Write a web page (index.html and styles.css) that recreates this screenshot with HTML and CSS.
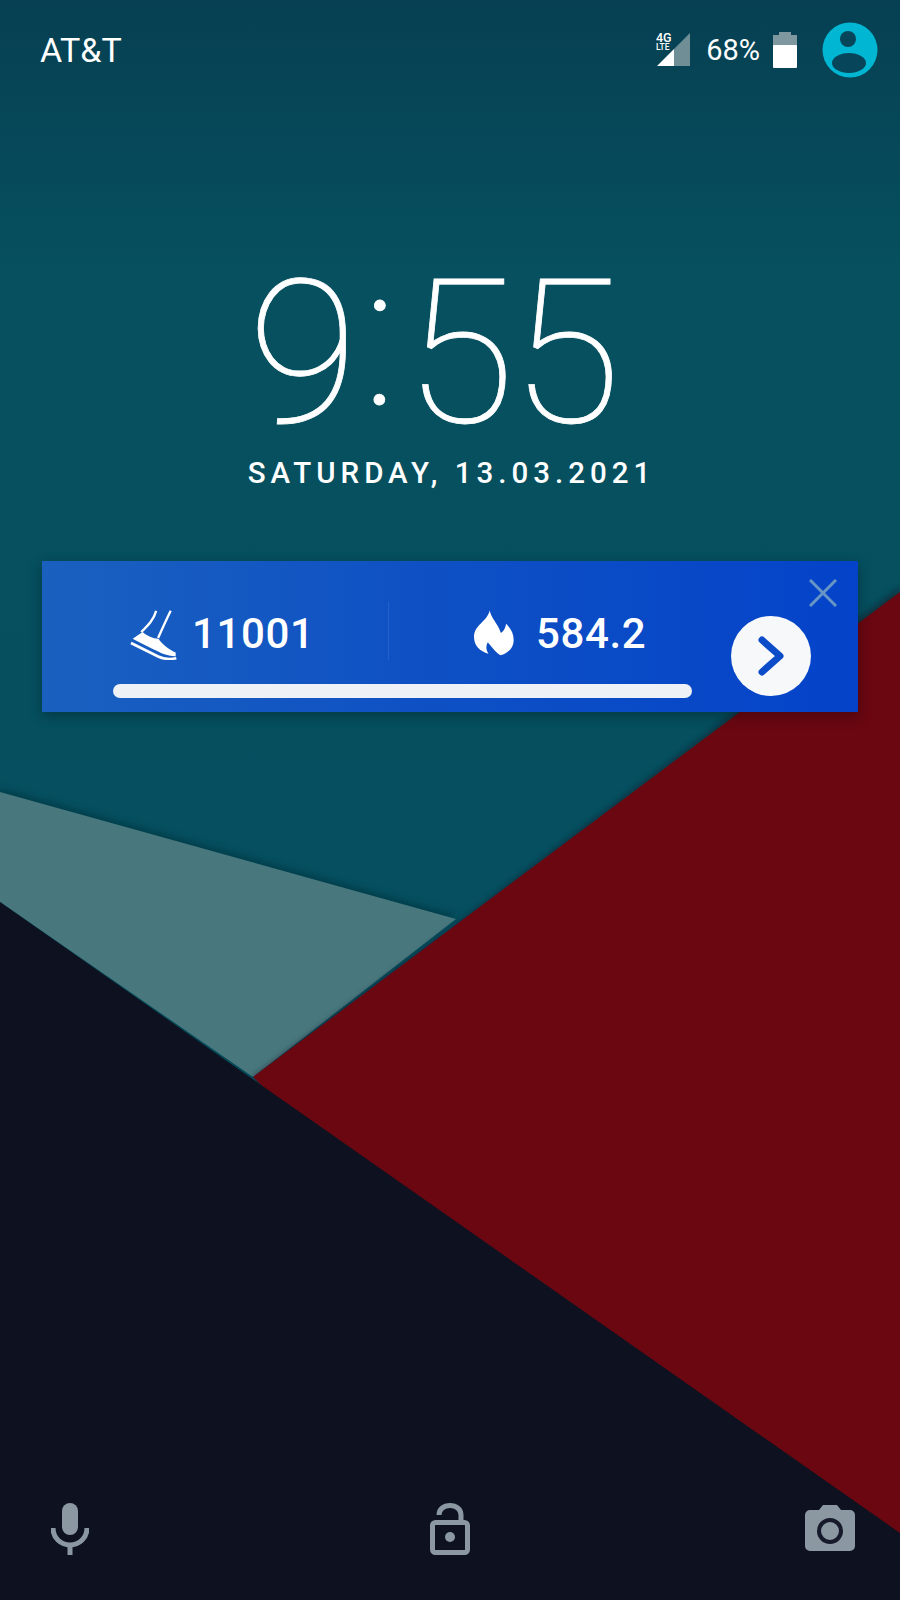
FILE: index.html
```html
<!DOCTYPE html>
<html lang="en">
<head>
<meta charset="utf-8">
<title>Lock screen</title>
<link rel="stylesheet" href="styles.css">
</head>
<body>
<main class="screen">
  <svg class="wallpaper" viewBox="0 0 900 1600" width="900" height="1600" aria-hidden="true">
    <defs>
      <linearGradient id="teal" x1="0" y1="0" x2="0" y2="1">
        <stop offset="0" stop-color="#064052"/>
        <stop offset="0.17" stop-color="#06505f"/>
        <stop offset="0.55" stop-color="#054f60"/>
      </linearGradient>
      <filter id="soft" x="-5%" y="-5%" width="110%" height="110%"><feGaussianBlur stdDeviation="3"/></filter>
    </defs>
    <rect width="900" height="1600" fill="url(#teal)"/>
    <polygon points="0,788 456,915 250,1075 0,900" fill="#02303b" opacity=".55" filter="url(#soft)"/>
    <polygon points="0,792 456,919 253,1077 0,902" fill="#48787e"/>
    <polygon points="900,588 900,1600 700,1600 253,1077 456,925" fill="#1c0a12" opacity=".5" filter="url(#soft)"/>
    <polygon points="900,592 900,1600 800,1600 253,1077" fill="#6a0711"/>
    <polygon points="0,902 900,1533 900,1600 0,1600" fill="#0e1220"/>
  </svg>

  <header class="status">
    <span class="carrier">AT&amp;T</span>
    <div class="status-right">
      <svg class="signal" viewBox="0 0 36 36" width="36" height="36" aria-hidden="true">
        <polygon points="35,1 35,34 19,34 19,17" fill="#6f8e96"/>
        <polygon points="19,17 19,34 2,34" fill="#fff"/>
        <text class="sig-4g" x="1" y="10">4G</text>
        <text class="sig-lte" x="1" y="18">LTE</text>
      </svg>
      <span class="battery-pct">68%</span>
      <svg class="battery" viewBox="0 0 24 36" width="24" height="36" aria-hidden="true">
        <path d="M0 3h6V0h12v3h6v13H0z" fill="#7f989f"/>
        <rect y="13" width="24" height="23" rx="1" fill="#fff"/>
      </svg>
      <svg class="avatar" viewBox="0 0 56 56" width="56" height="56" aria-hidden="true">
        <circle cx="28" cy="28" r="27.5" fill="#00b6d3"/>
        <circle cx="26" cy="17" r="8" fill="#06455a"/>
        <ellipse cx="27" cy="41" rx="17" ry="10" fill="#06455a"/>
      </svg>
    </div>
  </header>

  <section class="clock">
    <div class="time"><span>9</span><span class="colon">:</span><span>55</span></div>
    <div class="date">SATURDAY, 13.03.2021</div>
  </section>

  <section class="card">
    <svg class="close" viewBox="0 0 28 28" width="28" height="28" aria-hidden="true">
      <path d="M1 1l26 26M27 1L1 27" stroke="#6795c5" stroke-width="3" fill="none"/>
    </svg>
    <div class="card-main">
      <div class="stats">
        <div class="stat stat-steps">
          <svg class="shoe" viewBox="300 180 142 150" width="47" height="50" aria-hidden="true">
            <path d="M379 182C372 208 356 224 334 246M423 182C410 208 398 235 385 264" stroke="#fff" stroke-width="7" fill="none"/>
            <path d="M308 266L338 246C352 258 368 266 386 266C396 282 420 300 438 308V319C420 320 402 314 385 305C360 292 332 280 308 266Z" fill="#fff"/>
            <path d="M303 279L385 320C402 328 422 329 440 325" stroke="#fff" stroke-width="8" fill="none"/>
          </svg>
          <span class="num">11001</span>
        </div>
        <div class="divider"></div>
        <div class="stat stat-cal">
          <svg class="flame" viewBox="72 180 122 140" width="40" height="46" aria-hidden="true">
            <path d="M120 181C124 205 146 222 154 250C164 244 168 234 170 222C184 236 193 252 193 272C193 296 175 312 152 318C140 310 128 295 114 278C108 288 108 300 116 313C90 306 72 288 72 262C72 225 112 215 120 181Z" fill="#fff"/>
          </svg>
          <span class="num">584.2</span>
        </div>
      </div>
      <div class="progress"></div>
    </div>
    <div class="go">
      <svg viewBox="0 0 28 42" width="28" height="42" aria-hidden="true">
        <path d="M5 5l18 16L5 37" stroke="#0d4cc8" stroke-width="7" stroke-linecap="round" stroke-linejoin="round" fill="none"/>
      </svg>
    </div>
  </section>

  <footer class="actions">
    <svg viewBox="0 0 38 52" width="38" height="52" aria-hidden="true">
      <rect x="11" y="0" width="16" height="32" rx="8" fill="#8b98a2"/>
      <path d="M2 25C2 35 10 42 19 42S36 35 36 25" stroke="#8b98a2" stroke-width="5" fill="none"/>
      <path d="M19 41v11" stroke="#8b98a2" stroke-width="5" fill="none"/>
    </svg>
    <svg class="lock" viewBox="0 0 40 52" width="40" height="52" aria-hidden="true">
      <path d="M9 12C9 6 14 2.5 20 2.5S31 6 31 12V18" stroke="#8b98a2" stroke-width="5" fill="none"/>
      <rect x="2.5" y="19.5" width="35" height="30" rx="3" stroke="#8b98a2" stroke-width="5" fill="none"/>
      <circle cx="20" cy="34" r="5" fill="#8b98a2"/>
    </svg>
    <svg class="camera" viewBox="0 0 50 46" width="50" height="46" aria-hidden="true">
      <path d="M5 5h9l4-5h14l4 5h9a5 5 0 0 1 5 5v31a5 5 0 0 1-5 5H5a5 5 0 0 1-5-5V10a5 5 0 0 1 5-5z" fill="#8b98a2"/>
      <circle cx="25" cy="26" r="11" fill="#8b98a2" stroke="#161a2b" stroke-width="4"/>
    </svg>
  </footer>
</main>
</body>
</html>
```

FILE: styles.css
```css
* { box-sizing: border-box; }
html, body { margin: 0; padding: 0; }
body { background: #0e1220; font-family: Roboto, "Liberation Sans", sans-serif; color: #fff; }

.screen {
  position: relative;
  width: 900px;
  height: 1600px;
  overflow: hidden;
  display: flex;
  flex-direction: column;
}
.wallpaper { position: absolute; inset: 0; display: block; }
.status, .clock, .card, .actions { position: relative; }

.status {
  height: 100px;
  display: flex;
  align-items: center;
  justify-content: space-between;
  padding: 0 40px;
}
.carrier { font-size: 34px; }
.status-right { display: flex; align-items: center; }
.signal { overflow: visible; }
.sig-4g { font-size: 12.5px; font-weight: 500; fill: #fff; }
.sig-lte { font-size: 8.5px; font-weight: 500; fill: #fff; }
.battery-pct { font-size: 29px; margin-left: 15px; }
.battery { margin-left: 13px; }
.avatar { margin-left: 25px; margin-right: -18px; }

.clock {
  margin-top: 153px;
  height: 308px;
  text-align: center;
}
.time {
  font-size: 201px;
  font-weight: 100;
  line-height: 202px;
  letter-spacing: -4px;
  padding-right: 35px;
  -webkit-text-stroke: .8px #fff;
}
.colon {
  display: inline-block;
  margin: 0 11px 0 8px;
  transform: translateY(-18px);
}
.date {
  font-size: 29.5px;
  font-weight: 500;
  letter-spacing: 5px;
  line-height: 36px;
  padding-left: 3px;
}

.card {
  width: 816px;
  height: 151px;
  margin-left: 42px;
  padding: 41px 0 0 71px;
  display: flex;
  align-items: flex-start;
  background: linear-gradient(90deg, #1a60bf 0%, #0f51c4 45%, #0443c9 100%);
  box-shadow: 0 4px 14px rgba(0, 0, 0, .3);
  border-radius: 1px;
}
.close { position: absolute; top: 18px; right: 21px; }
.card-main { width: 579px; }
.stats { display: flex; height: 58px; align-items: center; }
.stat { display: flex; align-items: center; }
.stat-steps { width: 275px; padding-left: 17px; gap: 15px; }
.stat-cal { padding-left: 85px; gap: 22px; }
.shoe { margin-top: 8px; }
.flame { margin-top: 4px; }
.divider { width: 1px; height: 58px; background: rgba(255, 255, 255, .09); }
.num { font-size: 42px; font-weight: 500; letter-spacing: .6px; padding-top: 4px; }
.progress {
  height: 14px;
  margin-top: 24px;
  border-radius: 7px;
  background: #eef1f5;
}
.go {
  width: 80px;
  height: 80px;
  margin: 14px 0 0 39px;
  border-radius: 50%;
  background: #f7f8fa;
  display: flex;
  align-items: center;
  justify-content: center;
}

.actions {
  margin-top: auto;
  height: 97px;
  padding: 0 45px 0 51px;
  display: flex;
  align-items: flex-start;
  justify-content: space-between;
}
.lock { margin-left: 6px; }
.camera { margin-top: 2px; }
```
